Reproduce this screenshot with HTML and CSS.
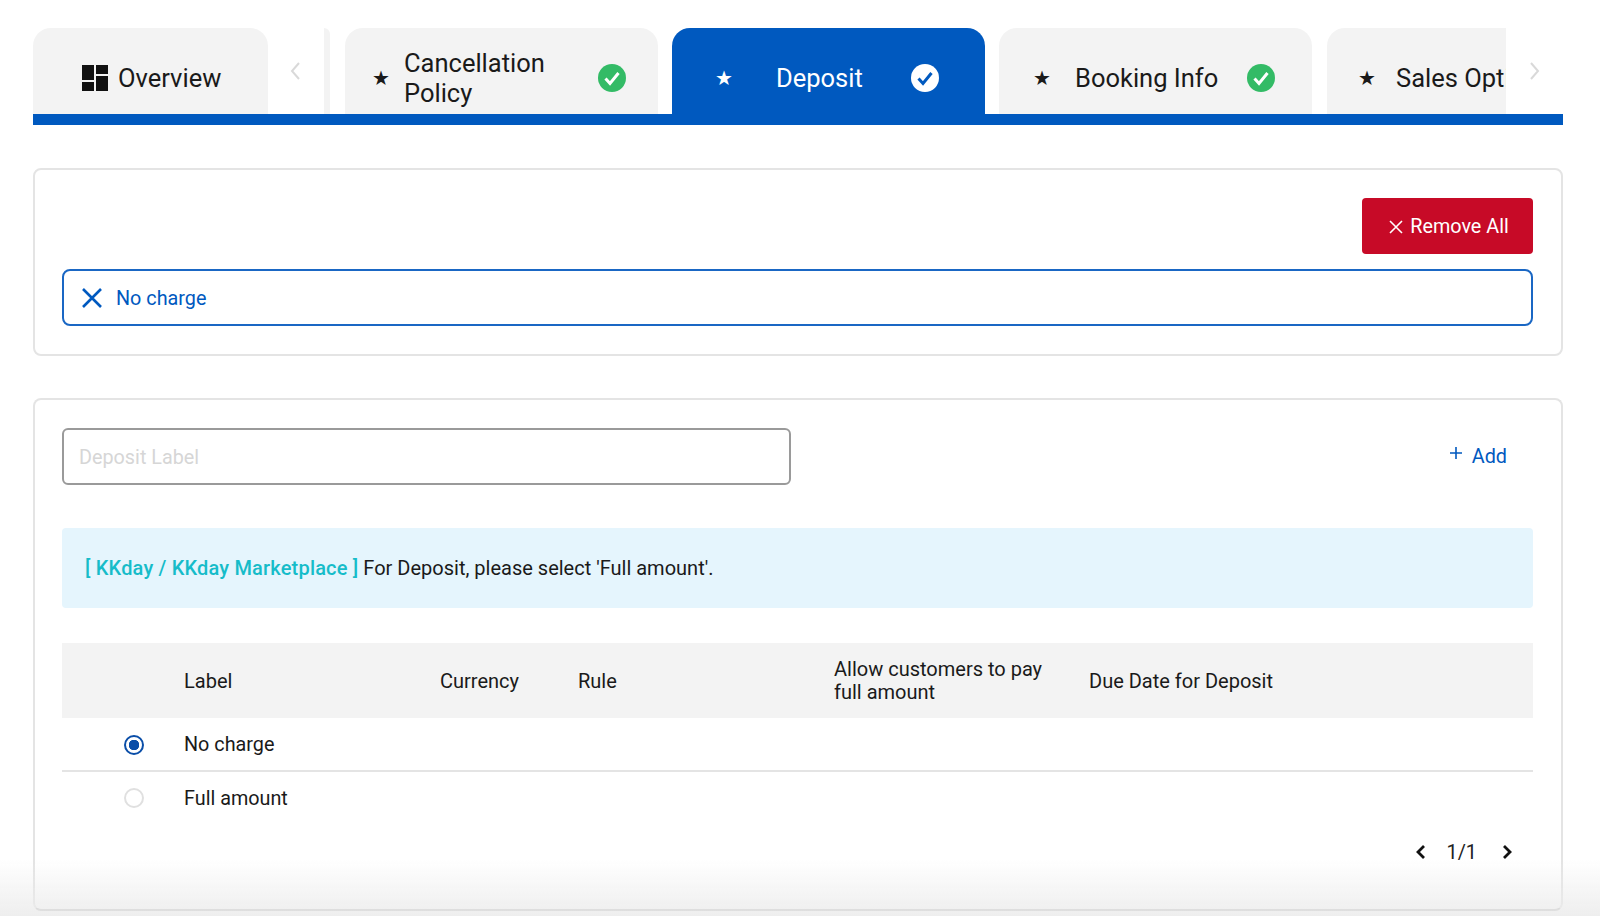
FILE: index.html
```html
<!DOCTYPE html>
<html lang="en">
<head>
<meta charset="utf-8">
<title>Deposit</title>
<link rel="stylesheet" href="styles.css">
</head>
<body>
<div class="page">
  <nav class="tabbar">
    <div class="tab tab-overview">
      <svg class="overview-icon" viewBox="0 0 26 26"><path d="M0 0h12v15H0zM14 0h12v9H14zM0 17h12v9H0zM14 11h12v15H14z"/></svg>
      <span>Overview</span>
    </div>
    <div class="arrow-slot"><svg class="arrow" viewBox="0 0 12 20"><path d="M10 2 3 10l7 8"/></svg></div>
    <div class="sliver"></div>
    <div class="tab-scroller">
      <div class="tab tab-step tab-cancel">
        <span class="star">★</span>
        <span class="tab-label">Cancellation Policy</span>
        <svg class="check" viewBox="0 0 28 28"><circle cx="14" cy="14" r="14" fill="#33bb66"/><path d="m7.5 14.5 4.5 5 8.5-10.5" fill="none" stroke="#fff" stroke-width="3"/></svg>
      </div>
      <div class="tab tab-step tab-active">
        <span class="star">★</span>
        <span class="tab-label">Deposit</span>
        <svg class="check" viewBox="0 0 28 28"><circle cx="14" cy="14" r="14" fill="#fff"/><path d="m7.5 14.5 4.5 5 8.5-10.5" fill="none" stroke="#0059bf" stroke-width="3"/></svg>
      </div>
      <div class="tab tab-step tab-booking">
        <span class="star">★</span>
        <span class="tab-label">Booking Info</span>
        <svg class="check" viewBox="0 0 28 28"><circle cx="14" cy="14" r="14" fill="#33bb66"/><path d="m7.5 14.5 4.5 5 8.5-10.5" fill="none" stroke="#fff" stroke-width="3"/></svg>
      </div>
      <div class="tab tab-step tab-sales">
        <span class="star">★</span>
        <span class="tab-label">Sales Options</span>
      </div>
    </div>
    <div class="arrow-slot arrow-slot-right"><svg class="arrow" viewBox="0 0 12 20"><path d="m2 2 7 8-7 8"/></svg></div>
  </nav>

  <section class="card card-selected">
    <div class="card-actions">
      <button class="btn-danger" type="button">
        <svg class="btn-x" viewBox="0 0 14 14"><path d="m1 1 12 12M13 1 1 13"/></svg>
        <span>Remove All</span>
      </button>
    </div>
    <div class="chip">
      <svg class="chip-x" viewBox="0 0 22 22"><path d="m2 2 18 18M20 2 2 20"/></svg>
      <span>No charge</span>
    </div>
  </section>

  <section class="card card-list">
    <div class="add-row">
      <input class="label-input" type="text" placeholder="Deposit Label">
      <button class="btn-add" type="button">
        <svg class="plus" viewBox="0 0 14 14"><path d="M7 1v12M1 7h12"/></svg>
        <span>Add</span>
      </button>
    </div>
    <div class="notice"><strong>[ KKday / KKday Marketplace ]</strong> For Deposit, please select 'Full amount'.</div>
    <div class="table">
      <div class="row row-head">
        <div></div>
        <div>Label</div>
        <div>Currency</div>
        <div>Rule</div>
        <div>Allow customers to pay full amount</div>
        <div>Due Date for Deposit</div>
      </div>
      <div class="row row-body row-line">
        <div class="radio-cell"><span class="radio radio-on"></span></div>
        <div>No charge</div>
      </div>
      <div class="row row-body row-last">
        <div class="radio-cell"><span class="radio"></span></div>
        <div>Full amount</div>
      </div>
    </div>
    <div class="pager">
      <svg class="pager-arrow" viewBox="0 0 12 16"><path d="M9 2 3 8l6 6"/></svg>
      <span>1/1</span>
      <svg class="pager-arrow pager-next" viewBox="0 0 12 16"><path d="m3 2 6 6-6 6"/></svg>
    </div>
  </section>
</div>
<div class="bottom-fade"></div>
</body>
</html>
```

FILE: styles.css
```css
* { box-sizing: border-box; }
html, body { margin: 0; height: 916px; overflow: hidden; background: #fff; }
body { font-family: Roboto, "Liberation Sans", sans-serif; color: #1a1a1a; font-size: 19.8px; }
.page { padding: 28px 37px 0 33px; }

.tabbar { display: flex; height: 97px; border-bottom: 11px solid #0059bf; }
.tab { height: 86px; background: #f3f3f3; border-radius: 18px 18px 0 0; display: flex; align-items: center; font-size: 25.5px; line-height: 30px; flex: none; padding-top: 14px; }
.tab-overview { width: 235px; padding-left: 49px; gap: 10px; }
.overview-icon { width: 26px; height: 26px; fill: #111; }
.arrow-slot { width: 56px; flex: none; display: flex; justify-content: center; padding: 33px 3px 0 0; }
.arrow { width: 12px; height: 20px; fill: none; stroke: #d9d9d9; stroke-width: 2; }
.sliver { width: 6px; height: 86px; flex: none; background: #f3f3f3; border-radius: 0 8px 0 0; margin-right: 15px; }
.tab-scroller { width: 1161px; flex: none; display: flex; gap: 14px; overflow: hidden; }
.tab-step { width: 313px; }
.star { width: 16px; font-size: 20px; line-height: 20px; flex: none; text-align: center; }
.tab-label { flex: none; white-space: nowrap; }
.check { width: 28px; height: 28px; margin-left: auto; flex: none; }
.tab-cancel { padding: 14px 32px 0 27px; }
.tab-cancel .tab-label { width: 178px; margin-left: 16px; white-space: normal; }
.tab-active { background: #0059bf; color: #fff; padding: 14px 46px 0 43px; }
.tab-active .tab-label { margin-left: 45px; }
.tab-booking { padding: 14px 37px 0 34px; }
.tab-booking .tab-label { margin-left: 26px; }
.tab-sales { margin-left: 1px; padding-left: 31px; }
.tab-sales .tab-label { margin-left: 22px; }
.arrow-slot-right { width: 57px; padding: 33px 0 0 0; }

.card { border: 2px solid #e4e4e4; border-radius: 8px; background: #fff; }
.card-selected { height: 188px; margin-top: 43px; padding: 28px 28px 0 27px; }
.card-actions { display: flex; justify-content: flex-end; }
.btn-danger { width: 171px; height: 56px; border: 0; border-radius: 4px; background: #c70a27; color: #fff; font: 19.8px Roboto, sans-serif; display: flex; align-items: center; justify-content: center; gap: 7px; padding: 1px 0 0 3px; }
.btn-x { width: 14px; height: 14px; fill: none; stroke: #fff; stroke-width: 1.6; }
.chip { height: 57px; margin-top: 15px; border: 2px solid #1a67c4; border-radius: 8px; display: flex; align-items: center; padding: 1px 0 0 17px; gap: 13px; color: #0059bf; }
.chip-x { width: 22px; height: 22px; fill: none; stroke: #0059bf; stroke-width: 2.6; }

.card-list { height: 513px; margin-top: 42px; padding: 28px 28px 0 27px; border-bottom-color: #b4b4b4; }
.add-row { display: flex; justify-content: space-between; align-items: center; }
.label-input { width: 729px; height: 57px; border: 2px solid #9a9a9a; border-radius: 6px; padding: 1px 15px 0; font: 19.8px Roboto, sans-serif; outline: 0; }
.label-input::placeholder { color: #d6d6d6; opacity: 1; }
.btn-add { border: 0; background: none; color: #0059bf; font: 19.8px Roboto, sans-serif; display: flex; align-items: center; gap: 9px; padding: 0 0 1px; margin-right: 26px; }
.plus { width: 14px; height: 14px; fill: none; stroke: #0059bf; stroke-width: 1.6; margin-top: -6px; }
.notice { height: 80px; margin-top: 43px; background: #e5f5fd; border-radius: 4px; display: flex; align-items: center; padding-left: 23px; white-space: pre; font-size: 20px; }
.notice strong { font-weight: 500; color: #16bcc9; letter-spacing: .18px; }

.table { margin-top: 35px; }
.row { display: grid; grid-template-columns: 122px 256px 138px 256px 255px 1fr; align-items: center; }
.row-head { height: 75px; background: #f3f3f3; line-height: 23px; padding-top: 1px; font-size: 20px; }
.row-head > div:nth-child(5) { padding-right: 20px; }
.row-body { height: 54px; }
.row-line { border-bottom: 2px solid #e4e4e4; padding-top: 1px; }
.row-last { height: 52px; }
.radio-cell { display: flex; padding-left: 62px; }
.radio { width: 20px; height: 20px; border: 2px solid #e0e0e0; border-radius: 50%; display: block; }
.radio-on { border-color: #0a4ea8; background: radial-gradient(circle, #0a4ea8 0 5px, #fff 5.5px); }

.pager { display: flex; justify-content: flex-end; align-items: center; gap: 20px; margin: 16px 20px 0 0; height: 24px; color: #222; }
.pager-arrow { width: 12px; height: 16px; fill: none; stroke: #111; stroke-width: 2.8; }
.pager-next { margin-left: 4px; }
.bottom-fade { position: fixed; left: 0; right: 0; bottom: 0; height: 56px; background: linear-gradient(to bottom, rgba(235,235,235,0), rgba(235,235,235,.85)); pointer-events: none; }
```
